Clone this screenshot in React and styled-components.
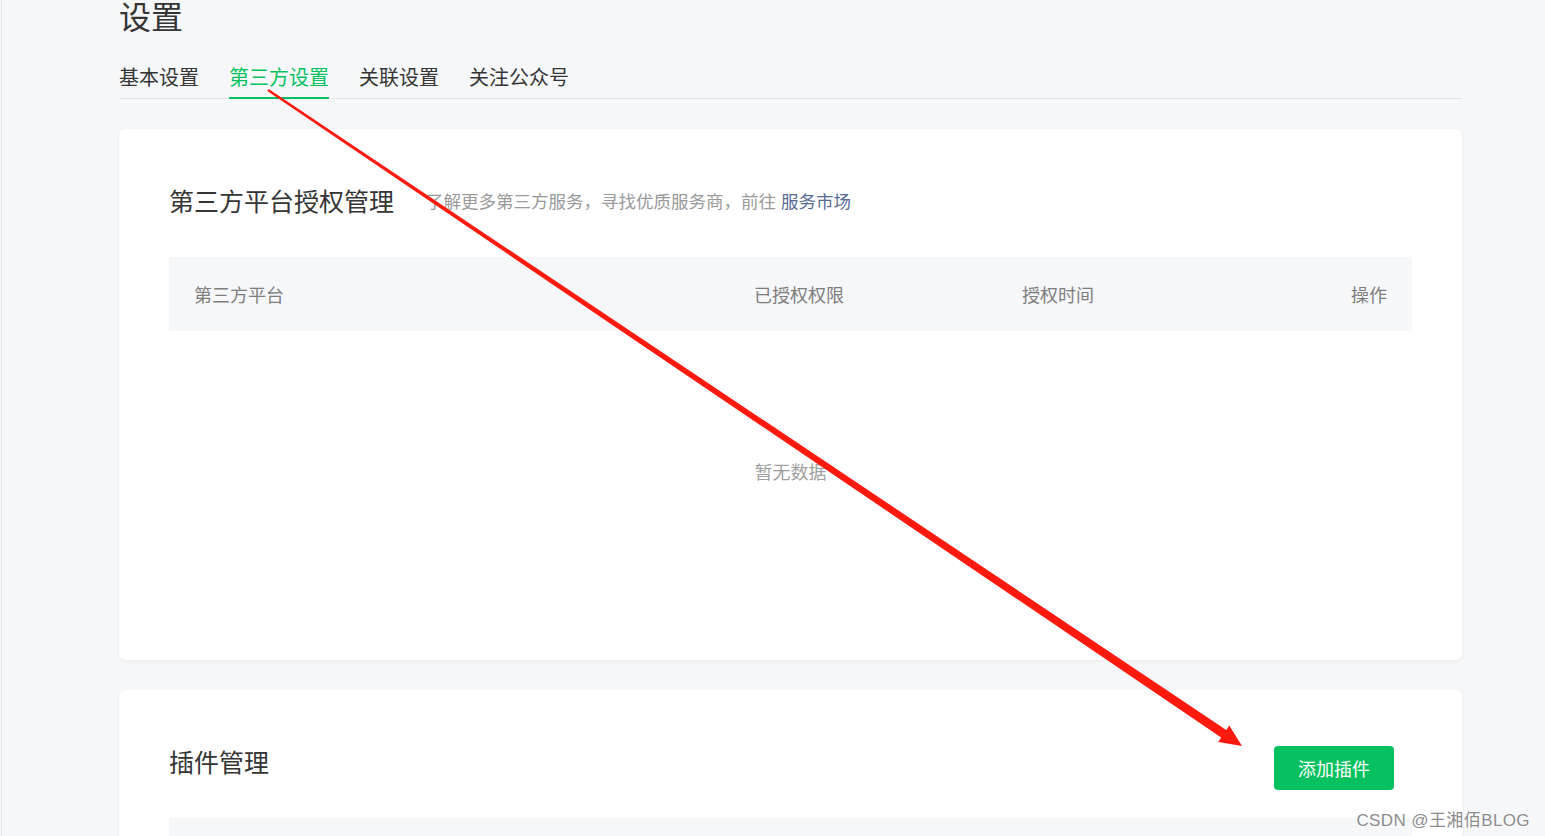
import styled, { createGlobalStyle } from "styled-components";

const GlobalStyle = createGlobalStyle`
  html, body {
    margin: 0;
    height: 100%;
    overflow: hidden;
    background: #f6f7f9;
    font-family: "Noto Sans CJK SC", "Liberation Sans", sans-serif;
    color: #353535;
  }
`;

const Shell = styled.div`
  position: relative;
  height: 836px;
  overflow: hidden;
  margin-left: 1px;
  border-left: 1px solid #e4e6e9;
  padding: 0 83px 0 117px;
`;

const PageTitle = styled.h1`
  margin: -7px 0 0 0;
  font-size: 32px;
  font-weight: 400;
  line-height: 44px;
  color: #353535;
`;

const Tabs = styled.div`
  display: flex;
  gap: 30px;
  margin-top: 25px;
  border-bottom: 1px solid #e1e3e6;
`;

const Tab = styled.div`
  font-size: 20px;
  line-height: 30px;
  padding-bottom: 5px;
  margin-bottom: -1px;
  color: ${(p) => (p.$active ? "#07c160" : "#353535")};
  border-bottom: 2px solid ${(p) => (p.$active ? "#07c160" : "transparent")};
`;

const Card = styled.section`
  margin-top: 30px;
  background: #fff;
  border-radius: 6px;
  box-shadow: 0 1px 3px rgba(0, 0, 0, 0.06);
  padding: 43px 50px 49px;
`;

const CardHeader = styled.div`
  display: flex;
  align-items: center;
  height: 56px;
`;

const CardTitle = styled.h2`
  margin: 0;
  font-size: 25px;
  font-weight: 400;
  color: #353535;
`;

const CardDesc = styled.span`
  margin-left: 32px;
  font-size: 17.5px;
  color: #9a9a9a;
  a {
    color: #576b95;
    text-decoration: none;
    margin-left: 5px;
  }
`;

const AddButton = styled.button`
  margin-left: auto;
  margin-right: 18px;
  align-self: flex-start;
  margin-top: 13px;
  width: 120px;
  height: 44px;
  border: none;
  border-radius: 4px;
  background: #07c160;
  color: #fff;
  font-family: inherit;
  font-size: 18px;
`;

const TableHead = styled.div`
  margin-top: 29px;
  display: grid;
  grid-template-columns: 560px 268px 1fr auto;
  align-items: center;
  height: 74px;
  padding: 0 25px;
  background: #f6f7f9;
  font-size: 18px;
  color: #7e7e7e;
`;

const Empty = styled.div`
  height: 280px;
  display: flex;
  align-items: center;
  justify-content: center;
  font-size: 18px;
  color: #a0a0a0;
`;

const Watermark = styled.div`
  position: absolute;
  right: 15px;
  bottom: 5px;
  font-size: 17px;
  color: #8c8c8c;
  letter-spacing: 0.4px;
  text-shadow: 0 0 2px #fff, 0 0 2px #fff;
  font-family: "Liberation Sans", "Noto Sans CJK SC", sans-serif;
`;

const Overlay = styled.svg`
  position: absolute;
  top: 0;
  left: -2px;
  pointer-events: none;
`;

const tabs = ["基本设置", "第三方设置", "关联设置", "关注公众号"];
const columns = ["第三方平台", "已授权权限", "授权时间", "操作"];

export default function App() {
  return (
    <>
      <GlobalStyle />
      <Shell>
        <PageTitle>设置</PageTitle>
        <Tabs>
          {tabs.map((t) => (
            <Tab key={t} $active={t === "第三方设置"}>
              {t}
            </Tab>
          ))}
        </Tabs>

        <Card>
          <CardHeader>
            <CardTitle>第三方平台授权管理</CardTitle>
            <CardDesc>
              了解更多第三方服务，寻找优质服务商，前往
              <a href="#">服务市场</a>
            </CardDesc>
          </CardHeader>
          <TableHead>
            {columns.map((c) => (
              <span key={c}>{c}</span>
            ))}
          </TableHead>
          <Empty>暂无数据</Empty>
        </Card>

        <Card>
          <CardHeader>
            <CardTitle>插件管理</CardTitle>
            <AddButton>添加插件</AddButton>
          </CardHeader>
          <TableHead />
        </Card>

        <Overlay width="1545" height="836" viewBox="0 0 1545 836">
          <polygon
            fill="#ff1a0f"
            points="267.3,91.1 1221.2,737.4 1218.2,742 1242,746 1229.3,725.4 1226.3,729.9 268.7,88.9"
          />
        </Overlay>
        <Watermark>CSDN @王湘佰BLOG</Watermark>
      </Shell>
    </>
  );
}
